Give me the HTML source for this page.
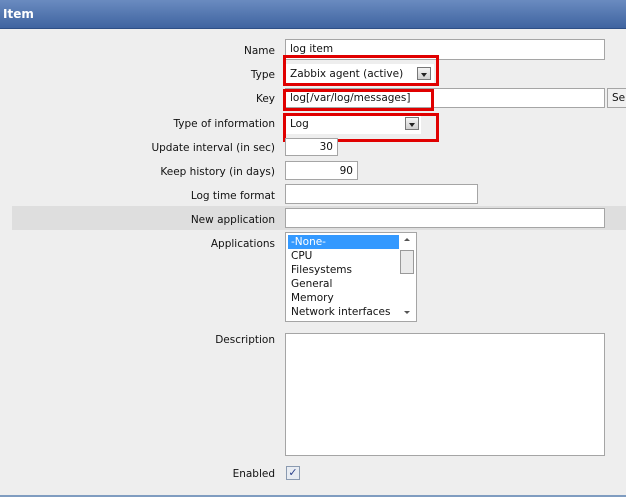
<!DOCTYPE html>
<html><head><style>
body{margin:0;width:626px;height:497px;background:#eeeeee;position:relative;overflow:hidden;font-family:"DejaVu Sans","Liberation Sans",sans-serif;font-size:10.5px;color:#111}
.hdr{position:absolute;left:0;top:0;width:626px;height:28px;background:linear-gradient(#6a8bc0,#3f64a0);border-bottom:1px solid #2d4f86}
.hdr span{position:absolute;left:3px;top:7px;color:#fff;font-weight:bold;font-size:12px}
.l{position:absolute;right:351px;white-space:nowrap}
.i{position:absolute;background:#fff;border:1px solid #a5a5a5;box-sizing:border-box;padding:3px 4px 0;white-space:nowrap;overflow:hidden}
.r{position:absolute;border:3px solid #e00000;box-sizing:border-box}
.dd{position:absolute;width:14px;height:13px;border:1px solid #777;background:linear-gradient(#f4f4f4,#cfcfcf);box-sizing:border-box}
.dd:after{content:"";position:absolute;left:3px;top:5px;border-left:3px solid transparent;border-right:3px solid transparent;border-top:4px solid #222}
</style></head><body>
<div class="hdr"><span>Item</span></div>
<div style="position:absolute;left:12px;top:206px;width:614px;height:24px;background:#dedede"></div>

<div class="l" style="top:45px">Name</div>
<div class="i" style="left:285px;top:39px;width:320px;height:21px">log item</div>

<div class="l" style="top:69px">Type</div>
<div class="i" style="left:286px;top:64px;width:148px;height:19px;border:none;padding-top:4px">Zabbix agent (active)</div>
<div class="dd" style="left:417px;top:67px"></div>
<div class="r" style="left:283px;top:55px;width:156px;height:31px"></div>

<div class="l" style="top:93px">Key</div>
<div class="i" style="left:285px;top:88px;width:320px;height:20px">log[/var/log/messages]</div>
<div class="i" style="left:607px;top:88px;width:30px;height:20px;background:#f0f0f0">Se</div>
<div class="r" style="left:283px;top:89px;width:151px;height:22px"></div>

<div class="l" style="top:118px">Type of information</div>
<div class="i" style="left:286px;top:114px;width:135px;height:20px;border:none;padding-top:4px">Log</div>
<div class="dd" style="left:405px;top:117px"></div>
<div class="r" style="left:283px;top:113px;width:156px;height:29px"></div>

<div class="l" style="top:142px">Update interval (in sec)</div>
<div class="i" style="left:285px;top:138px;width:53px;height:18px;text-align:right;padding:2px 4px 0">30</div>

<div class="l" style="top:166px">Keep history (in days)</div>
<div class="i" style="left:285px;top:161px;width:73px;height:19px;text-align:right;padding:3px 4px 0">90</div>

<div class="l" style="top:190px">Log time format</div>
<div class="i" style="left:285px;top:184px;width:193px;height:20px"></div>

<div class="l" style="top:214px">New application</div>
<div class="i" style="left:285px;top:208px;width:320px;height:20px"></div>

<div class="l" style="top:238px">Applications</div>
<div class="i" style="left:285px;top:232px;width:132px;height:90px;padding:2px;line-height:14px">
<div style="background:#3399ff;color:#fff;width:108px;padding-left:3px">-None-</div>
<div style="padding-left:3px">CPU<br>Filesystems<br>General<br>Memory<br>Network interfaces</div>
</div>
<div style="position:absolute;left:400px;top:250px;width:14px;height:24px;border:1px solid #999;background:#eaeaea;box-sizing:border-box"></div>
<div style="position:absolute;left:404px;top:238px;border-left:3px solid transparent;border-right:3px solid transparent;border-bottom:3px solid #555"></div>
<div style="position:absolute;left:404px;top:311px;border-left:3px solid transparent;border-right:3px solid transparent;border-top:3px solid #555"></div>

<div class="l" style="top:334px">Description</div>
<div class="i" style="left:285px;top:333px;width:320px;height:123px"></div>

<div class="l" style="top:468px">Enabled</div>
<div style="position:absolute;left:286px;top:466px;width:12px;height:12px;border:1px solid #8a9ab0;background:#e8ecf2;color:#2a3f8a;font-size:11px;line-height:12px;text-align:center">✓</div>

<div style="position:absolute;left:0;top:495px;width:626px;height:2px;background:#7f9cc0"></div>
</body></html>
